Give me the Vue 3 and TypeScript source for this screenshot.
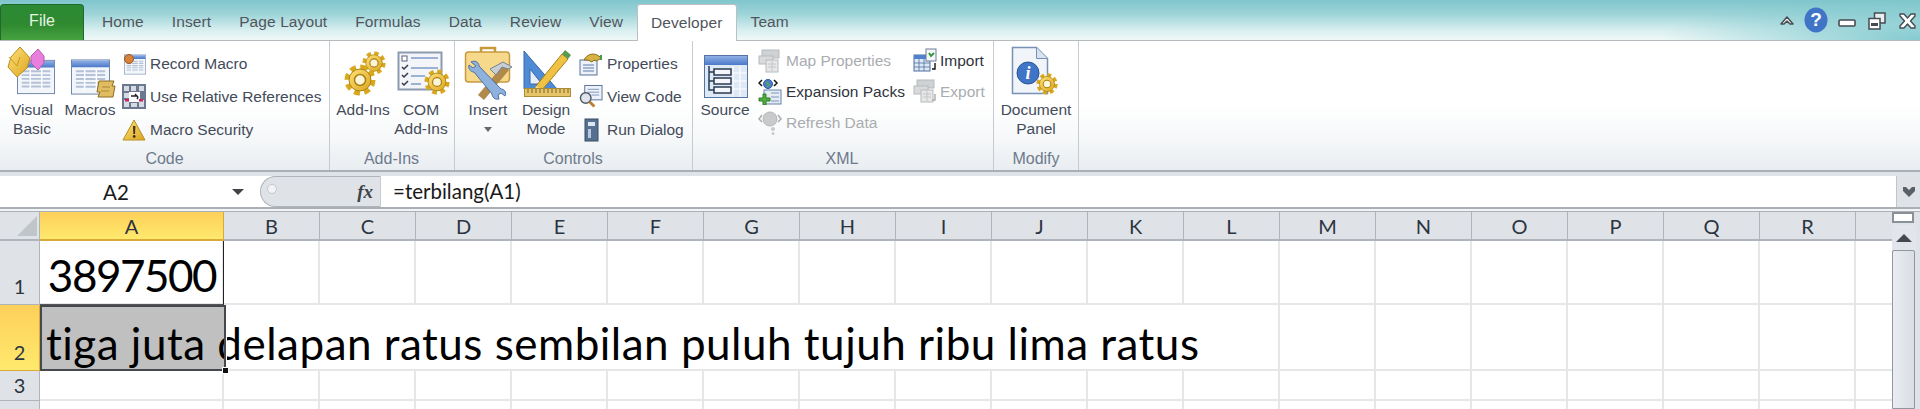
<script setup lang="ts">
const columns = ['A','B','C','D','E','F','G','H','I','J','K','L','M','N','O','P','Q','R','']
const rows = [
  { num: '1', cls: 'r1' },
  { num: '2', cls: 'r2' },
  { num: '3', cls: 'r3' },
  { num: '', cls: 'r4' },
]

const tabs = ['Home', 'Insert', 'Page Layout', 'Formulas', 'Data', 'Review', 'View', 'Developer', 'Team']

// the long text in A2 runs over its neighbours up to column L
function cellClass(r: number, c: number) {
  return {
    cell: true,
    spill: r === 1 && c < 11,
    last: c === columns.length - 1,
  }
}
</script>

<template>
  <div class="excel">
    <svg class="defs" aria-hidden="true">
      <defs>
        <linearGradient id="hdr" x1="0" y1="0" x2="0" y2="1">
          <stop offset="0" stop-color="#8fb0e6" />
          <stop offset="1" stop-color="#4a78c8" />
        </linearGradient>
        <linearGradient id="gold" x1="0" y1="0" x2="1" y2="1">
          <stop offset="0" stop-color="#ffe27a" />
          <stop offset="1" stop-color="#dca51e" />
        </linearGradient>
        <symbol id="sheet" viewBox="0 0 40 36">
          <rect x="0.5" y="0.5" width="39" height="35" fill="#f2f5fa" stroke="#6d84a8" />
          <rect x="1" y="1" width="38" height="7" fill="url(#hdr)" />
          <path d="M5 12h30M5 16h30M5 20h30M5 24h30M5 28h30" stroke="#b4c1d6" stroke-width="2" />
          <path d="M14 10v21M26 10v21" stroke="#fff" stroke-width="1.5" />
        </symbol>
        <symbol id="gear" viewBox="0 0 32 32">
          <circle cx="16" cy="16" r="12.5" fill="none" stroke="#d9a81c" stroke-width="6" stroke-dasharray="5.6 4.2" />
          <circle cx="16" cy="16" r="11" fill="url(#gold)" stroke="#a98212" stroke-width="1" />
          <circle cx="16" cy="16" r="5.5" fill="#fbf5dc" stroke="#a98212" stroke-width="1.5" />
        </symbol>
        <symbol id="ghost" viewBox="0 0 24 24">
          <rect x="4" y="1" width="17" height="8" fill="#cfd2d4" stroke="#b8babc" />
          <rect x="1" y="7" width="14" height="8" fill="#d8dadb" stroke="#b8babc" />
          <rect x="8" y="11" width="12" height="12" fill="#e6e7e8" stroke="#b8babc" />
          <path d="M10 15h8M10 18h8M14 12v10" stroke="#c4c6c8" />
        </symbol>
      </defs>
    </svg>

    <header class="tabstrip">
      <div class="file">File</div>
      <div v-for="t in tabs" :key="t" class="tab" :class="{ active: t === 'Developer' }">{{ t }}</div>
      <div class="winbtns">
        <svg width="14" height="11" viewBox="0 0 14 11"><path d="M1 9l6-7 6 7-3 0-3-3-3 3z" fill="#fff" stroke="#4a4f55" stroke-width="1.6" stroke-linejoin="round" /></svg>
        <svg class="help" width="24" height="26" viewBox="0 0 24 26">
          <ellipse cx="12" cy="13" rx="11.5" ry="12.5" fill="#3f74c6" />
          <text x="12" y="19" text-anchor="middle" class="help-q">?</text>
        </svg>
        <svg class="min" width="18" height="8" viewBox="0 0 18 8"><rect x="1" y="1" width="16" height="6" rx="1" fill="#fff" stroke="#464b52" stroke-width="1.6" /></svg>
        <svg class="restore" width="18" height="18" viewBox="0 0 18 18">
          <rect x="6.5" y="1" width="10.5" height="10" fill="#e8eef0" stroke="#464b52" stroke-width="1.5" />
          <rect x="1" y="6.5" width="11" height="10.5" fill="#fff" stroke="#464b52" stroke-width="1.5" />
          <rect x="3" y="11" width="7" height="3" fill="#464b52" />
        </svg>
        <svg class="close" width="17" height="16" viewBox="0 0 17 16"><path d="M1 1h4l3.500 4 3.500-4h4v2l-4.500 5 4.500 5v2h-4l-3.500-4-3.500 4h-4v-2l4.500-5-4.500-5z" fill="#fff" stroke="#464b52" stroke-width="1.4" stroke-linejoin="round" /></svg>
      </div>
    </header>

    <section class="ribbon">
      <div class="group g-code">
        <div class="content">
          <div class="large w52">
            <svg class="big" width="52" height="55" viewBox="0 0 52 55">
              <use href="#sheet" x="11" y="14" width="38" height="36" />
              <path d="M14 2l10 11-3 10-10 9-9-10 3-10z" fill="url(#gold)" stroke="#b98d1c" />
              <path d="M3 12l8 9 3-9" fill="none" stroke="#c79a22" />
              <path d="M32 4l6 7v7l-6 7-7-7v-7z" fill="#e87fdc" stroke="#b45db0" />
            </svg>
            <span>Visual</span><span>Basic</span>
          </div>
          <div class="large w56">
            <svg class="big" width="56" height="55" viewBox="0 0 56 55">
              <use href="#sheet" x="9" y="14" width="39" height="36" />
              <path d="M37 36h15l-2 5 3 0-2 11H36l2-5-3 0z" fill="#e0bd62" stroke="#8c6d22" />
              <path d="M40 42h8M39 46h8" stroke="#a98835" />
            </svg>
            <span>Macros</span>
          </div>
          <div class="smalls s33">
            <div class="small">
              <svg width="24" height="24" viewBox="0 0 24 24">
                <use href="#sheet" x="2" y="2" width="22" height="21" />
                <circle cx="7" cy="7" r="4.500" fill="#d9823a" stroke="#9c5a22" />
              </svg>
              <span>Record Macro</span>
            </div>
            <div class="small">
              <svg width="24" height="25" viewBox="0 0 24 25">
                <rect width="24" height="25" fill="#6c7890" />
                <path d="M2 2h5v5H2zM9 2h5v5H9zM17 2h5v5h-5zM2 9h5v5H2zM2 16h5v7H2zM17 16h5v7h-5zM9 19h6v4H9z" fill="#d6dae2" />
                <rect x="7" y="8" width="11" height="10" fill="#fff" />
                <path d="M9 12h6l-2-2M15 12c1 1 1 2 0 3" fill="none" stroke="#222" stroke-width="1.400" />
                <rect x="3" y="15" width="4" height="2.500" fill="#c9245c" />
                <rect x="17" y="15" width="4" height="2.500" fill="#c9245c" />
              </svg>
              <span>Use Relative References</span>
            </div>
            <div class="small">
              <svg width="24" height="22" viewBox="0 0 24 22">
                <path d="M12 1l11 20H1z" fill="url(#gold)" stroke="#b59027" stroke-linejoin="round" />
                <path d="M11 7h2.400l-.4 8h-1.600z" fill="#3a3320" />
                <circle cx="12.200" cy="17.500" r="1.400" fill="#3a3320" />
              </svg>
              <span>Macro Security</span>
            </div>
          </div>
        </div>
        <div class="glabel">Code</div>
      </div>

      <div class="group g-addins">
        <div class="content">
          <div class="large w56">
            <svg class="big" width="56" height="55" viewBox="0 0 56 55">
              <use href="#gear" x="27" y="6" width="24" height="24" />
              <use href="#gear" x="9" y="19" width="32" height="32" />
            </svg>
            <span>Add-Ins</span>
          </div>
          <div class="large w60">
            <svg class="big" width="60" height="55" viewBox="0 0 60 55">
              <rect x="7.500" y="7.500" width="43" height="37" fill="#f3f5f9" stroke="#8d9bb0" stroke-width="2" />
              <path d="M20 13h27M20 23h27M20 31h14M20 39h10" stroke="#7d9cc8" stroke-width="1.500" />
              <rect x="11" y="11" width="5" height="5" fill="#fff" stroke="#56657c" />
              <path d="M11 22l2 2 4-4M11 30l2 2 4-4M11 38l2 2 4-4" fill="none" stroke="#2f3a4a" stroke-width="1.500" />
              <use href="#gear" x="33" y="24" width="26" height="26" />
            </svg>
            <span>COM</span><span>Add-Ins</span>
          </div>
        </div>
        <div class="glabel">Add-Ins</div>
      </div>

      <div class="group g-controls">
        <div class="content">
          <div class="large w56">
            <svg class="big" width="56" height="55" viewBox="0 0 56 55">
              <path d="M21 7V3h14v4" fill="none" stroke="#c79a3a" stroke-width="2.500" />
              <rect x="5.500" y="7" width="44" height="30" rx="3" fill="#f6d98a" stroke="#c59a42" stroke-width="1.500" />
              <path d="M18 50l25-30 6 5-25 30z" fill="#b08a4a" />
              <path d="M30 24l13-7 9 5-4 2-6-2-6 8z" fill="#c8ced6" stroke="#77818e" />
              <path d="M11 17c4-2 8 0 8 4l22 23c3 0 6 3 4 7l-4-3-3 2 1 4c-4 1-7-2-7-5L14 27c-4 0-6-4-5-7l4 3 3-2z" fill="#8eb1de" stroke="#51719e" />
            </svg>
            <span>Insert</span>
            <i class="caret" />
          </div>
          <div class="large w60">
            <svg class="big" width="60" height="55" viewBox="0 0 60 55">
              <path d="M8 6l33 38H8z" fill="#4f8ad4" stroke="#3669ad" />
              <path d="M14 24l12 15H14z" fill="#fff" fill-opacity=".85" stroke="#3669ad" />
              <path d="M20 41L46 9l6 5-26 31-8 3z" fill="#f0c243" stroke="#a67f1e" />
              <path d="M46 9l3-4 6 5-3 4z" fill="#5a9a52" />
              <path d="M20 41l6 4-8 3z" fill="#f3dfb3" />
              <rect x="8.500" y="43.500" width="46" height="8" fill="#e6c56a" stroke="#a98c36" />
              <path d="M12 44v4M16 44v4M20 44v4M24 44v4M28 44v4M32 44v4M36 44v4M40 44v4M44 44v4M48 44v4M52 44v4" stroke="#7b6525" />
            </svg>
            <span>Design</span><span>Mode</span>
          </div>
          <div class="smalls s33 ctl-smalls">
            <div class="small">
              <svg width="24" height="24" viewBox="0 0 24 24">
                <rect x="1" y="8" width="17" height="15" fill="#eef2f8" stroke="#56709a" />
                <path d="M4 13h11M4 16h11M4 19h11" stroke="#5c7bb0" />
                <path d="M5 8c3-6 9-7 13-5l5 3-6 3-2-1-2 2-4-2z" fill="#d8b245" stroke="#8a6f20" />
                <path d="M22 3v5" stroke="#4b9a4b" stroke-width="2" />
              </svg>
              <span>Properties</span>
            </div>
            <div class="small">
              <svg width="25" height="25" viewBox="0 0 25 25">
                <rect x="6" y="1" width="18" height="15" fill="#eef2f8" stroke="#56709a" />
                <path d="M9 5h12M9 8h12M13 11h8" stroke="#7e97bf" />
                <circle cx="7" cy="14" r="5.500" fill="#dfe4ea" stroke="#4f5a68" stroke-width="1.500" />
                <path d="M11 18l5 5" stroke="#b9812e" stroke-width="3" />
              </svg>
              <span>View Code</span>
            </div>
            <div class="small">
              <svg width="24" height="24" viewBox="0 0 24 24">
                <rect x="6" y="1" width="13" height="22" fill="#56708f" stroke="#3a4c64" />
                <rect x="9" y="4" width="7" height="4" fill="#dfe6f0" />
                <rect x="9" y="11" width="3" height="9" fill="#b9c8dc" />
              </svg>
              <span>Run Dialog</span>
            </div>
          </div>
        </div>
        <div class="glabel">Controls</div>
      </div>

      <div class="group g-xml">
        <div class="content">
          <div class="large w56">
            <svg class="big" width="56" height="55" viewBox="0 0 56 55">
              <rect x="7.500" y="10.500" width="43" height="42" fill="#dfe9f6" stroke="#5574a4" />
              <rect x="8" y="11" width="42" height="9" fill="url(#hdr)" />
              <path d="M36 21v31M43 21v31M36 28h14M36 36h14M36 44h14" stroke="#fff" />
              <g fill="#f3f6fb" stroke="#2b3a50" stroke-width="1.500">
                <rect x="17" y="24" width="17" height="6" />
                <rect x="17" y="33" width="17" height="6" />
                <rect x="17" y="42" width="17" height="6" />
              </g>
              <path d="M12 21v24h5M12 27h5M12 36h5" fill="none" stroke="#2b3a50" stroke-width="1.500" />
            </svg>
            <span>Source</span>
          </div>
          <div class="smalls s31 col1">
            <div class="small muted">
              <svg width="24" height="24" viewBox="0 0 24 24"><use href="#ghost" width="24" height="24" /></svg>
              <span>Map Properties</span>
            </div>
            <div class="small dark">
              <svg width="24" height="26" viewBox="0 0 24 26">
                <path d="M4 1L1 4l3 3M16 1l3 3-3 3" fill="none" stroke="#111" stroke-width="1.500" />
                <circle cx="10" cy="5" r="4.500" fill="#4b80c8" stroke="#2c5a9a" />
                <path d="M8 3l3 3-2 2" fill="none" stroke="#5aa84f" stroke-width="1.500" />
                <rect x="6" y="11" width="17" height="14" fill="#e6ecf4" stroke="#6583ac" />
                <path d="M13 14h8M13 18h8M13 22h8" stroke="#7d96bb" />
                <path d="M1 19h4v-4h3v4h4v3H8v4H5v-4H1z" fill="#4fb03f" stroke="#2e7a26" />
              </svg>
              <span>Expansion Packs</span>
            </div>
            <div class="small muted">
              <svg width="24" height="26" viewBox="0 0 24 26">
                <circle cx="12" cy="9" r="7" fill="#c8cacc" stroke="#b4b6b8" />
                <path d="M4 5L1 9l3 3M20 5l3 4-3 3" fill="none" stroke="#a9abad" stroke-width="1.500" />
                <circle cx="15" cy="19" r="2" fill="#c8cacc" /><circle cx="15" cy="23.500" r="1.500" fill="#c8cacc" />
              </svg>
              <span>Refresh Data</span>
            </div>
          </div>
          <div class="smalls s31 col2">
            <div class="small dark tight">
              <svg width="24" height="25" viewBox="0 0 24 25">
                <rect x="1" y="7" width="16" height="16" fill="#dfe9f6" stroke="#4f6fa0" />
                <rect x="1" y="7" width="16" height="4" fill="#5180cc" />
                <path d="M6 11v12M11 11v12M1 15h16M1 19h16" stroke="#4f6fa0" stroke-width=".8" />
                <rect x="13" y="1" width="10" height="12" fill="#f4f6fa" stroke="#6b7d97" />
                <path d="M16 5l2 3 3-3" fill="none" stroke="#37983a" stroke-width="2" />
                <path d="M22 15v6h-3" fill="none" stroke="#111" stroke-width="1.400" />
              </svg>
              <span>Import</span>
            </div>
            <div class="small muted tight">
              <svg width="24" height="25" viewBox="0 0 24 25">
                <use href="#ghost" width="24" height="24" />
                <path d="M22 15v6h-3" fill="none" stroke="#a9abad" stroke-width="1.400" />
              </svg>
              <span>Export</span>
            </div>
          </div>
        </div>
        <div class="glabel">XML</div>
      </div>

      <div class="group g-doc">
        <div class="content">
          <div class="large w84">
            <svg class="big" width="84" height="55" viewBox="0 0 84 55">
              <path d="M18.500 2.500h24l11 11v35h-35z" fill="#f1f5fa" stroke="#7890b4" stroke-width="1.500" />
              <path d="M42.500 2.500v11h11" fill="#d8e2f0" stroke="#7890b4" />
              <circle cx="34" cy="28" r="11" fill="#3f74c6" stroke="#2a5598" />
              <text x="34" y="34" text-anchor="middle" class="doc-i">i</text>
              <use href="#gear" x="42" y="28" width="22" height="22" />
            </svg>
            <span>Document</span><span>Panel</span>
          </div>
        </div>
        <div class="glabel doc-label">Modify</div>
      </div>
    </section>

    <div class="ribbon-foot" />

    <section class="formula">
      <div class="namebox">
        <span class="nameval">A2</span>
        <i class="down" />
      </div>
      <div class="pill">
        <i class="grip" />
        <span class="fx">fx</span>
      </div>
      <div class="input">=terbilang(A1)</div>
      <div class="expand">
        <svg width="14" height="12" viewBox="0 0 14 12"><path d="M1 1l3 0 3 3 3-3 3 0 0 4-6 6-6-6z" fill="#5a6068" /></svg>
      </div>
    </section>
    <div class="formula-foot" />

    <section class="workbook">
      <div class="grid">
        <div class="corner"><i /></div>
        <div v-for="(c, i) in columns" :key="'h' + i" class="colhead" :class="{ on: c === 'A', tail: i === columns.length - 1 }">{{ c }}</div>
        <template v-for="(row, r) in rows" :key="row.cls">
          <div class="rowhead" :class="[row.cls, { on: r === 1 }]">{{ row.num }}</div>
          <div v-for="(c, i) in columns" :key="row.cls + i" :class="cellClass(r, i)">
            <div v-if="r === 0 && i === 0" class="a1">3897500</div>
            <div v-if="r === 1 && i === 0" class="a2">tiga juta delapan ratus sembilan puluh tujuh ribu lima ratus</div>
            <i v-if="r === 1 && i === 0" class="handle" />
          </div>
        </template>
      </div>
      <aside class="scrollbar">
        <div class="split" />
        <div class="up"><i /></div>
        <div class="thumb" />
      </aside>
    </section>
  </div>
</template>

<style>
html, body {
  margin: 0;
  overflow: hidden;
  background: #fff;
}
</style>

<style scoped>
.excel {
  width: 1920px;
  height: 409px;
  overflow: hidden;
  display: flex;
  flex-direction: column;
  font-family: "Liberation Sans", Arial, sans-serif;
  color: #444b5a;
  position: relative;
}

.defs {
  position: absolute;
  width: 0;
  height: 0;
}

.tabstrip {
  height: 41px;
  flex: none;
  box-sizing: border-box;
  display: flex;
  align-items: flex-end;
  background:
    radial-gradient(ellipse 260px 50px at 100% 100%, rgba(120, 198, 204, 0.9), rgba(120, 198, 204, 0) 100%),
    linear-gradient(#7fc6cc 0, #9ed4d8 35%, #d8eeef 75%, #f0f8f8 100%);
  border-bottom: 1px solid #b5babe;
}

.file {
  width: 84px;
  height: 36px;
  margin-right: 4px;
  box-sizing: border-box;
  padding-top: 5px;
  text-align: center;
  font-size: 16px;
  line-height: 22px;
  color: #e8f4e4;
  border-radius: 4px 4px 0 0;
  border: 1px solid #1f6a2a;
  border-bottom: 0;
  background: linear-gradient(#2a8a34 0, #2f8a30 55%, #45a240 100%);
}

.tab {
  height: 36px;
  padding: 7px 14px 0;
  box-sizing: border-box;
  font-size: 15.5px;
  letter-spacing: 0.1px;
  line-height: 22px;
  color: #50555c;
  white-space: nowrap;
}

.tab.active {
  height: 37px;
  margin-bottom: -1px;
  padding: 7px 13px 0;
  background: #fff;
  border: 1px solid #bcc0c4;
  border-bottom: 0;
  border-radius: 3px 3px 0 0;
}

.winbtns {
  margin-left: auto;
  align-self: stretch;
  display: flex;
  align-items: center;
  padding-right: 4px;
}

.winbtns svg {
  flex: none;
  display: block;
}

.help {
  margin: 0 0 -3px 10px;
  transform: translateY(-2px);
}

.help-q {
  font: bold 19px "Liberation Sans", sans-serif;
  fill: #fff;
}

.min {
  margin: 6px 0 0 10px;
}

.restore {
  margin: 2px 0 0 12px;
}

.close {
  margin: 2px 0 0 13px;
}

.ribbon {
  height: 129px;
  flex: none;
  display: flex;
  background: linear-gradient(#fff 0, #fff 50%, #f6f8f9 75%, #e9edf1 100%);
}

.group {
  box-sizing: border-box;
  display: flex;
  flex-direction: column;
  border-right: 1px solid #c6cbd1;
}

.g-code { width: 330px; padding-left: 6px; }
.g-addins { width: 125px; padding-left: 5px; }
.g-controls { width: 238px; padding-left: 5px; }
.g-xml { width: 301px; padding-left: 4px; }
.g-doc { width: 85px; }

.content {
  height: 108px;
  display: flex;
  padding-top: 4px;
  box-sizing: border-box;
}

.glabel {
  margin-left: -6px;
  text-align: center;
  font-size: 16px;
  line-height: 19px;
  color: #6d7a8c;
}

.doc-label {
  margin-left: 0;
}

.large {
  display: flex;
  flex-direction: column;
  align-items: center;
  font-size: 15.5px;
  line-height: 19px;
  white-space: nowrap;
}

.big {
  display: block;
  flex: none;
}

.w52 { width: 52px; margin-right: 4px; }
.w56 { width: 56px; }
.w60 { width: 60px; }
.w84 { width: 84px; }

.caret {
  margin-top: 8px;
  width: 0;
  height: 0;
  border: 4px solid transparent;
  border-top: 5px solid #666b72;
  border-bottom: 0;
}

.smalls {
  display: flex;
  flex-direction: column;
  font-size: 15.5px;
  white-space: nowrap;
}

.s33 {
  margin-left: 4px;
  padding-top: 2px;
}

.s31 {
  padding-top: 0;
}

.ctl-smalls {
  margin-left: 3px;
}

.col1 {
  width: 155px;
  margin-left: 5px;
}

.small {
  display: flex;
  align-items: center;
  gap: 4px;
}

.s33 .small { height: 33px; }
.s31 .small { height: 31px; }

.small svg {
  flex: none;
  width: 24px;
}

.muted { color: #a9acb0; }
.dark { color: #2f343c; }
.tight { gap: 3px; }

.doc-i {
  font: bold italic 18px "Liberation Serif", serif;
  fill: #fff;
}

.ribbon-foot {
  height: 6px;
  flex: none;
  box-sizing: border-box;
  background: #dfe3e8;
  border-top: 2px solid #a9afb5;
}

.formula {
  height: 31px;
  flex: none;
  display: flex;
  background: #fff;
  font-family: Lato, "Liberation Sans", sans-serif;
  font-size: 20.5px;
  color: #1a1a1a;
  font-variant-ligatures: none;
}

.namebox {
  width: 260px;
  flex: none;
  display: flex;
  align-items: center;
  position: relative;
}

.nameval {
  width: 232px;
  text-align: center;
}

.down {
  width: 0;
  height: 0;
  border: 6px solid transparent;
  border-top: 6px solid #404448;
  border-bottom: 0;
}

.pill {
  width: 121px;
  flex: none;
  box-sizing: border-box;
  display: flex;
  align-items: center;
  justify-content: space-between;
  padding: 0 7px 0 6px;
  background: #dfe3e8;
  border: 1px solid #aeb4ba;
  border-right: 1px solid #c8ccd1;
  border-radius: 16px 0 0 16px;
}

.grip {
  width: 8px;
  height: 8px;
  margin-bottom: 6px;
  border-radius: 50%;
  background: #f2f3f5;
  border: 1px solid #c4c8cc;
}

.fx {
  font: italic bold 19px "Liberation Serif", serif;
  color: #3f444a;
}

.input {
  flex: 1;
  padding-left: 12px;
  line-height: 30px;
}

.expand {
  width: 24px;
  flex: none;
  box-sizing: border-box;
  display: flex;
  align-items: center;
  justify-content: center;
  background: #dfe3e8;
  border-left: 1px solid #c0c5ca;
}

.formula-foot {
  height: 5px;
  flex: none;
  box-sizing: border-box;
  background: #f2f4f6;
  border-top: 2px solid #a9afb5;
  border-bottom: 1px solid #aab0b6;
}

.workbook {
  flex: 1;
  min-height: 0;
  display: flex;
  overflow: hidden;
}

.grid {
  width: 1892px;
  flex: none;
  display: grid;
  grid-template-columns: 40px 184px repeat(17, 96px) 36px;
  grid-template-rows: 29px 64px 66px 30px 30px;
  font-family: Lato, "Liberation Sans", sans-serif;
  font-variant-ligatures: none;
}

.corner {
  background: #dfe3e8;
  border-right: 1px solid #aeb4ba;
  border-bottom: 2px solid #aeb4ba;
  box-sizing: border-box;
  position: relative;
}

.corner i {
  position: absolute;
  right: 2px;
  bottom: 3px;
  width: 0;
  height: 0;
  border-left: 20px solid transparent;
  border-bottom: 20px solid #c0c5ca;
}

.colhead {
  box-sizing: border-box;
  background: #dfe3e8;
  border-right: 1px solid #aeb4ba;
  border-bottom: 2px solid #aeb4ba;
  text-align: center;
  font-size: 20px;
  line-height: 28px;
  color: #2c3440;
}

.colhead.tail {
  border-right: 0;
}

.colhead.on {
  background: linear-gradient(#fdd05a, #ffe96e);
  border-color: #d9a93a;
}

.rowhead {
  box-sizing: border-box;
  display: flex;
  align-items: flex-end;
  justify-content: center;
  background: #dfe3e8;
  border-right: 1px solid #aeb4ba;
  border-bottom: 1px solid #aeb4ba;
  font-size: 20px;
  line-height: 28px;
  color: #2c3440;
  padding-bottom: 4px;
}

.rowhead.r3 {
  padding-bottom: 1px;
}

.rowhead.on {
  background: linear-gradient(#fdd05a, #ffe96e);
  border-color: #d9a93a;
}

.cell {
  box-sizing: border-box;
  position: relative;
  border-right: 2px solid #e4e6e8;
  border-bottom: 2px solid #e4e6e8;
  background: #fff;
}

.cell.last {
  border-right: 0;
}

.cell.spill {
  border-right: 0;
}

.a1 {
  position: absolute;
  inset: 0 0 0 0;
  display: flex;
  align-items: flex-end;
  justify-content: flex-end;
  padding: 0 7px 3px 0;
  border-right: 1px solid #222;
  border-bottom: 1px solid #555;
  font-size: 44px;
  letter-spacing: -1.5px;
  line-height: 52px;
  color: #000;
  margin-right: -2px;
  margin-bottom: -2px;
}

.a2 {
  position: absolute;
  left: 0;
  right: -2px;
  top: 0;
  bottom: -2px;
  padding: 12px 0 0 6px;
  box-sizing: border-box;
  white-space: nowrap;
  font-size: 44px;
  letter-spacing: 0.5px;
  line-height: 52px;
  color: #000;
  background: #c0c0c0;
  z-index: 1;
}

.a2::after {
  content: "";
  position: absolute;
  inset: 0;
  border: 2px solid #45494d;
  box-shadow: 1px 0 0 #fff;
}

.handle {
  position: absolute;
  right: -5px;
  bottom: -5px;
  width: 5px;
  height: 5px;
  background: #111;
  border: 1px solid #fff;
  z-index: 2;
}

.scrollbar {
  flex: 1;
  display: flex;
  flex-direction: column;
  background: #dfe3e8;
}

.split {
  width: 22px;
  height: 11px;
  box-sizing: border-box;
  border: 2px solid #8a9198;
  background: #fff;
  margin-bottom: 2px;
}

.up {
  width: 24px;
  height: 25px;
  display: flex;
  align-items: center;
  justify-content: center;
  background: #e2e6ec;
}

.up i {
  width: 0;
  height: 0;
  border: 8px solid transparent;
  border-bottom: 8px solid #44484e;
  border-top: 0;
}

.thumb {
  width: 23px;
  flex: 1;
  box-sizing: border-box;
  border: 1px solid #90979e;
  border-radius: 2px 2px 0 0;
  background: linear-gradient(90deg, #e9ecf1, #dadee4);
}
</style>
